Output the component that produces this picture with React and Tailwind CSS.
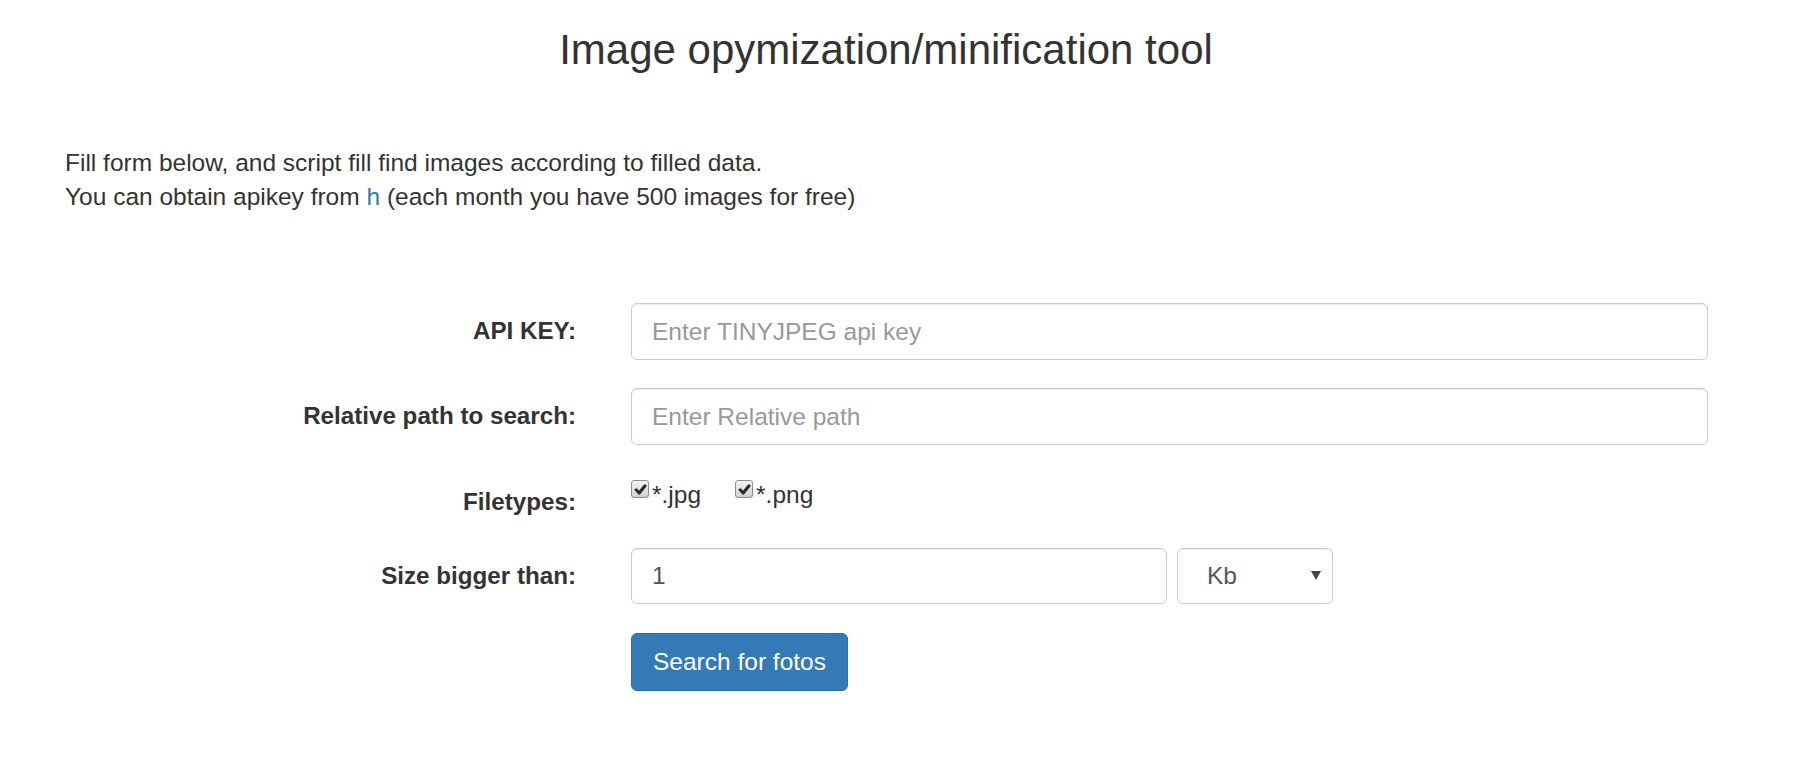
import React, { useState } from 'react';

const CheckMark = () => (
  <svg viewBox="0 0 12 12" className="w-[13px] h-[13px]">
    <path d="M2 6.3 L4.8 9.3 L10.2 2.6" fill="none" stroke="#2a2a2a" strokeWidth="2.8" strokeLinecap="round" strokeLinejoin="round" />
  </svg>
);

const FakeCheckbox = ({ checked, onChange, label }) => (
  <label className="flex items-start cursor-pointer select-none">
    <input type="checkbox" checked={checked} onChange={onChange} className="sr-only" />
    <span className="w-[18px] h-[18px] flex items-center justify-center rounded-[3px] border border-[#8f8f8f] bg-gradient-to-b from-[#f2f2f2] to-[#cfcfcf]">
      {checked && <CheckMark />}
    </span>
    <span className="ml-[3px] mt-[3px] leading-[24px]">{label}</span>
  </label>
);

const App = () => {
  const [apiKey, setApiKey] = useState('');
  const [path, setPath] = useState('');
  const [jpg, setJpg] = useState(true);
  const [png, setPng] = useState(true);
  const [size, setSize] = useState('1');
  const [unit, setUnit] = useState('Kb');

  const inputCls =
    'h-full w-full rounded-[6px] border border-[#ccc] bg-white pl-[20px] pr-4 text-[24.5px] text-[#555] placeholder:text-[#999] shadow-[inset_0_1px_1px_rgba(0,0,0,0.075)] outline-none focus:border-[#66afe9]';

  return (
    <div className="min-h-screen bg-white text-[#333] font-['Liberation_Sans',Arial,sans-serif]">
      <h1 className="pt-[26px] pr-[30px] text-center text-[42px] leading-[48px] font-normal">
        Image opymization/minification tool
      </h1>

      <div className="mt-[72px] pl-[65px] text-[24.5px] leading-[34px]">
        <p>Fill form below, and script fill find images according to filled data.</p>
        <p>
          You can obtain apikey from <a href="#" className="text-[#337ab7]">h</a> (each month you have 500 images for free)
        </p>
      </div>

      <form className="mt-[89px]" onSubmit={(e) => e.preventDefault()}>
        <div className="flex items-center h-[57px]">
          <label className="w-[576px] text-right text-[24.2px] font-bold">API KEY:</label>
          <div className="ml-[55px] w-[1077px] h-full">
            <input
              type="text"
              placeholder="Enter TINYJPEG api key"
              value={apiKey}
              onChange={(e) => setApiKey(e.target.value)}
              className={inputCls}
            />
          </div>
        </div>

        <div className="mt-[28px] flex items-center h-[57px]">
          <label className="w-[576px] text-right text-[24.2px] font-bold">Relative path to search:</label>
          <div className="ml-[55px] w-[1077px] h-full">
            <input
              type="text"
              placeholder="Enter Relative path"
              value={path}
              onChange={(e) => setPath(e.target.value)}
              className={inputCls}
            />
          </div>
        </div>

        <div className="mt-[28px] flex items-start h-[47px]">
          <label className="w-[576px] pt-[17px] text-right text-[24.2px] leading-[24px] font-bold">Filetypes:</label>
          <div className="ml-[55px] pt-[7px] flex gap-[34px] text-[24.5px]">
            <FakeCheckbox checked={jpg} onChange={() => setJpg(!jpg)} label="*.jpg" />
            <FakeCheckbox checked={png} onChange={() => setPng(!png)} label="*.png" />
          </div>
        </div>

        <div className="mt-[28px] flex items-center h-[56px]">
          <label className="w-[576px] text-right text-[24.2px] font-bold">Size bigger than:</label>
          <div className="ml-[55px] flex gap-[10px] h-full">
            <div className="w-[536px] h-full">
              <input
                type="text"
                value={size}
                onChange={(e) => setSize(e.target.value)}
                className={inputCls}
              />
            </div>
            <div className="relative w-[156px] h-full">
              <select
                value={unit}
                onChange={(e) => setUnit(e.target.value)}
                className="appearance-none h-full w-full rounded-[6px] border border-[#ccc] bg-white pl-[29px] text-[24.5px] text-[#555] shadow-[inset_0_1px_1px_rgba(0,0,0,0.075)] outline-none"
              >
                <option>b</option>
                <option>Kb</option>
                <option>Mb</option>
              </select>
              <svg viewBox="0 0 10 9" className="pointer-events-none absolute right-[12px] top-[23px] w-[10px] h-[9px]">
                <path d="M0 0 H10 L5 9 Z" fill="#444" />
              </svg>
            </div>
          </div>
        </div>

        <div className="mt-[29px] ml-[631px]">
          <button
            type="submit"
            className="h-[58px] w-[217px] rounded-[6px] border border-[#2e6da4] bg-[#337ab7] text-[24.5px] text-white hover:bg-[#286090]"
          >
            Search for fotos
          </button>
        </div>
      </form>
    </div>
  );
};

export default App;
